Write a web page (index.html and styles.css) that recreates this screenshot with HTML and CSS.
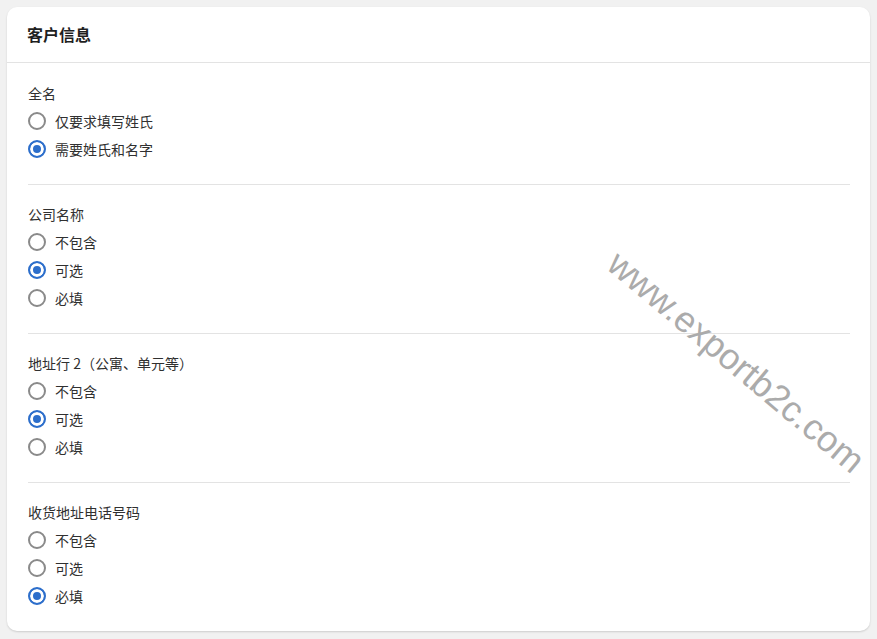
FILE: index.html
```html
<!DOCTYPE html>
<html lang="zh-CN">
  <head>
    <meta charset="UTF-8" />
    <meta name="viewport" content="width=device-width, initial-scale=1.0" />
    <title>客户信息</title>
    <link rel="stylesheet" href="styles.css">
  </head>
  <body>
    <div class="card">
      <h2 class="card-title">客户信息</h2>
      <div class="card-body">
        <fieldset class="group">
          <legend class="group-label">全名</legend>
          <label class="option"><input type="radio" name="fullName" /> 仅要求填写姓氏</label>
          <label class="option"><input type="radio" name="fullName" checked /> 需要姓氏和名字</label>
        </fieldset>

        <fieldset class="group">
          <legend class="group-label">公司名称</legend>
          <label class="option"><input type="radio" name="company" /> 不包含</label>
          <label class="option"><input type="radio" name="company" checked /> 可选</label>
          <label class="option"><input type="radio" name="company" /> 必填</label>
        </fieldset>

        <fieldset class="group">
          <legend class="group-label">地址行 2（公寓、单元等）</legend>
          <label class="option"><input type="radio" name="address2" /> 不包含</label>
          <label class="option"><input type="radio" name="address2" checked /> 可选</label>
          <label class="option"><input type="radio" name="address2" /> 必填</label>
        </fieldset>

        <fieldset class="group">
          <legend class="group-label">收货地址电话号码</legend>
          <label class="option"><input type="radio" name="phone" /> 不包含</label>
          <label class="option"><input type="radio" name="phone" /> 可选</label>
          <label class="option"><input type="radio" name="phone" checked /> 必填</label>
        </fieldset>
      </div>
      <!-- watermark -->
      <div class="watermark">www.exportb2c.com</div>
    </div>
  </body>
</html>
```

FILE: styles.css
```css
body {
  margin: 0;
  padding: 7px;
  background: #f1f1f1;
  font-family: "Noto Sans CJK SC", "Liberation Sans", sans-serif;
  font-size: 14px;
  color: #303030;
}

.card {
  position: relative;
  background: #fff;
  border-radius: 10px;
  box-shadow: 0 1px 2px rgba(0, 0, 0, 0.15);
  height: 624px;
  box-sizing: border-box;
}

.card-title {
  margin: 0;
  height: 53px;
  padding: 0 0 2px 20px;
  display: flex;
  align-items: center;
  font-size: 16px;
  font-weight: 700;
  color: #1f1f1f;
  border-bottom: 1px solid #e3e3e3;
}

.card-body {
  padding: 1px 20px 0 21px;
}

.group {
  margin: 0;
  padding: 15px 0 21px;
  border: none;
  border-bottom: 1px solid #e3e3e3;
  display: flex;
  flex-direction: column;
}
.group:last-child {
  border-bottom: none;
}

.group-label {
  float: left;
  padding: 0;
  height: 28px;
  line-height: 28px;
}

.option {
  display: flex;
  align-items: center;
  gap: 9px;
  height: 28px;
}

.option input {
  appearance: none;
  -webkit-appearance: none;
  margin: 0;
  width: 18px;
  height: 18px;
  border: 2px solid #8a8a8a;
  border-radius: 50%;
  box-sizing: border-box;
  background: #fff;
}
.option input:checked {
  border-color: #2c6ecb;
  background: #2c6ecb;
  box-shadow: inset 0 0 0 3px #fff;
}

.watermark {
  position: absolute;
  left: 729px;
  top: 355px;
  transform: translate(-50%, -50%) rotate(40deg);
  font-family: "Liberation Sans", sans-serif;
  font-size: 36px;
  color: #ababab;
  white-space: nowrap;
  pointer-events: none;
}
```
